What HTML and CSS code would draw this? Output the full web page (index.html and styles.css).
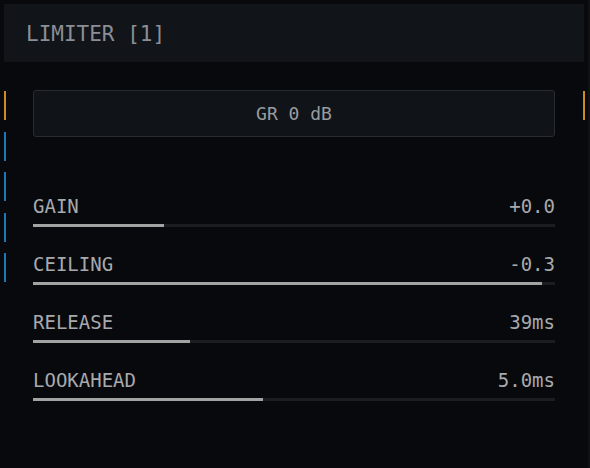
FILE: index.html
```html
<!DOCTYPE html>
<html lang="en">
<head>
<meta charset="utf-8">
<title>Limiter</title>
<link rel="stylesheet" href="styles.css">
</head>
<body>
<div class="panel">
  <header class="head">LIMITER [1]</header>
  <div class="main">
    <div class="meters-left">
      <span class="tick tick-orange"></span>
      <span class="tick tick-blue"></span>
      <span class="tick tick-blue"></span>
      <span class="tick tick-blue"></span>
      <span class="tick tick-blue"></span>
    </div>
    <div class="content">
      <div class="gr">GR 0 dB</div>
      <div class="params">
        <div class="param">
          <div class="param-top"><span>GAIN</span><span>+0.0</span></div>
          <div class="track"><div class="fill" style="width:25%"></div></div>
        </div>
        <div class="param">
          <div class="param-top"><span>CEILING</span><span>-0.3</span></div>
          <div class="track"><div class="fill" style="width:97.5%"></div></div>
        </div>
        <div class="param">
          <div class="param-top"><span>RELEASE</span><span>39ms</span></div>
          <div class="track"><div class="fill" style="width:30%"></div></div>
        </div>
        <div class="param">
          <div class="param-top"><span>LOOKAHEAD</span><span>5.0ms</span></div>
          <div class="track"><div class="fill" style="width:44%"></div></div>
        </div>
      </div>
    </div>
    <div class="meters-right">
      <span class="tick tick-orange"></span>
    </div>
  </div>
</div>
</body>
</html>
```
FILE: styles.css
```css
html, body {
  margin: 0;
  padding: 0;
  background: #08090c;
}
body {
  width: 590px;
  height: 468px;
  overflow: hidden;
  font-family: "DejaVu Sans Mono", "Liberation Mono", monospace;
}
.panel {
  height: 468px;
  box-sizing: border-box;
  padding-top: 4px;
  border-right: 2px solid #0f1115;
}
.head {
  box-sizing: border-box;
  height: 58px;
  margin: 0 4px 0 4px;
  padding: 2px 0 0 22px;
  background: #111419;
  color: #8b8f95;
  font-size: 21px;
  line-height: 56px;
  letter-spacing: 0;
}
.main {
  display: grid;
  grid-template-columns: 33px 522px 33px;
}
.meters-left {
  display: flex;
  flex-direction: column;
  gap: 11.5px;
  padding: 29px 0 0 4px;
}
.meters-right {
  display: flex;
  flex-direction: column;
  padding: 29px 0 0 28px;
}
.tick {
  display: block;
  width: 2px;
  height: 29px;
}
.tick-orange { background: #d08c22; }
.tick-blue { background: #1f78b6; }
.content {
  padding-top: 28px;
}
.gr {
  box-sizing: border-box;
  height: 47px;
  border: 1px solid #272b32;
  border-radius: 3px;
  background: #101317;
  color: #999ca1;
  font-size: 18px;
  line-height: 45px;
  text-align: center;
}
.params {
  display: flex;
  flex-direction: column;
  gap: 26px;
  margin-top: 58px;
}
.param-top {
  display: flex;
  justify-content: space-between;
  color: #a7a9ad;
  font-size: 19px;
  line-height: 22px;
}
.track {
  margin-top: 7px;
  height: 3px;
  background: #1a1d22;
}
.fill {
  height: 100%;
  background: #a3a3a3;
}
```
